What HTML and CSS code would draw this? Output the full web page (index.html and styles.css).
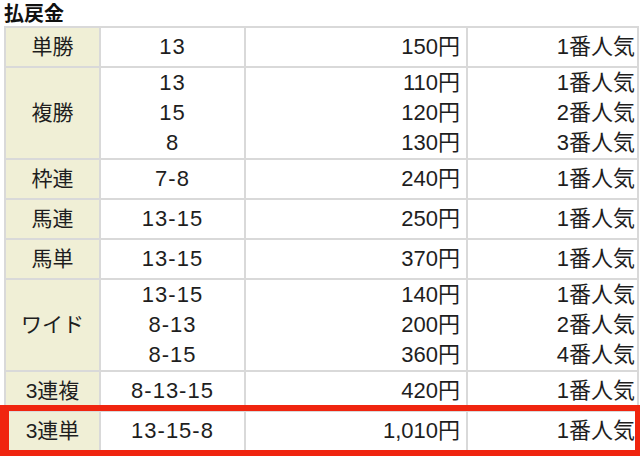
FILE: index.html
```html
<!DOCTYPE html>
<html lang="ja">
<head>
<meta charset="utf-8">
<link rel="stylesheet" href="styles.css">
</head>
<body>
<div class="page">
  <h2 class="title">払戻金</h2>
  <table class="payout">
    <colgroup>
      <col class="c1"><col class="c2"><col class="c3"><col class="c4">
    </colgroup>
    <tr>
      <th>単勝</th><td class="num">13</td><td class="yen">150円</td><td class="pop">1番人気</td>
    </tr>
    <tr class="multi">
      <th>複勝</th><td class="num">13<br>15<br>8</td><td class="yen">110円<br>120円<br>130円</td><td class="pop">1番人気<br>2番人気<br>3番人気</td>
    </tr>
    <tr>
      <th>枠連</th><td class="num">7-8</td><td class="yen">240円</td><td class="pop">1番人気</td>
    </tr>
    <tr>
      <th>馬連</th><td class="num">13-15</td><td class="yen">250円</td><td class="pop">1番人気</td>
    </tr>
    <tr>
      <th>馬単</th><td class="num">13-15</td><td class="yen">370円</td><td class="pop">1番人気</td>
    </tr>
    <tr class="multi">
      <th>ワイド</th><td class="num">13-15<br>8-13<br>8-15</td><td class="yen">140円<br>200円<br>360円</td><td class="pop">1番人気<br>2番人気<br>4番人気</td>
    </tr>
    <tr>
      <th>3連複</th><td class="num">8-13-15</td><td class="yen">420円</td><td class="pop">1番人気</td>
    </tr>
    <tr>
      <th>3連単</th><td class="num">13-15-8</td><td class="yen">1,010円</td><td class="pop">1番人気</td>
    </tr>
  </table>
  <div class="highlight"></div>
</div>
</body>
</html>
```

FILE: styles.css
```css
html, body {
  margin: 0;
  padding: 0;
  background: #ffffff;
}

.page {
  position: relative;
  width: 640px;
  height: 456px;
  overflow: hidden;
  font-family: "Liberation Sans", "Noto Sans CJK JP", sans-serif;
  color: #1e1e1e;
}

.title {
  margin: 0;
  padding: 0 0 0 4px;
  line-height: 26px;
  font-size: 20px;
  font-weight: bold;
  font-family: "Noto Sans CJK JP", sans-serif;
  color: #111;
}

.payout {
  margin-left: 4px;
  border-collapse: collapse;
  table-layout: fixed;
  width: 633px;
  font-size: 22px;
}

.c1 { width: 95px; }
.c2 { width: 145px; }
.c3 { width: 222px; }
.c4 { width: 171px; }

.payout th,
.payout td {
  border: 2px solid #d9d9d9;
  padding: 0;
  line-height: 38px;
  font-weight: normal;
  white-space: nowrap;
}

.payout tr.multi th,
.payout tr.multi td {
  line-height: 30px;
}

.payout th {
  background: #f0efd6;
  text-align: center;
  font-size: 21px;
}

.num {
  text-align: center;
  letter-spacing: 1px;
}

.yen {
  text-align: right;
  padding-right: 6px !important;
}

.pop {
  text-align: right;
  padding-right: 2px !important;
}

.highlight {
  position: absolute;
  left: 0;
  top: 405px;
  width: 640px;
  height: 51px;
  box-sizing: border-box;
  border-style: solid;
  border-color: #f0250f;
  border-width: 6px 5px 6px 9px;
}
```
